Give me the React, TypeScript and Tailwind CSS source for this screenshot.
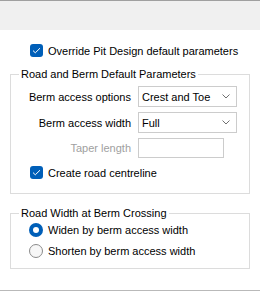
import React from 'react';

const Check: React.FC<{ label: string }> = ({ label }) => (
  <div className="flex items-center gap-[5px] h-[17px]">
    <span className="flex items-center justify-center w-[13px] h-[13px] rounded-[3px] bg-[#005fb8]">
      <svg width="9" height="7" viewBox="0 0 9 7">
        <polyline points="1,3.6 3.3,5.8 8,1.2" fill="none" stroke="#fff" strokeWidth="1" />
      </svg>
    </span>
    <span>{label}</span>
  </div>
);

const Radio: React.FC<{ label: string; checked?: boolean }> = ({ label, checked }) => (
  <div className="flex items-center gap-[5px] h-[17px]">
    {checked ? (
      <span className="flex items-center justify-center w-[14px] h-[14px] rounded-full bg-[#005fb8]">
        <span className="w-[6px] h-[6px] rounded-full bg-white" />
      </span>
    ) : (
      <span className="w-[14px] h-[14px] rounded-full border border-[#8b8b8b] bg-[#f7f7f7]" />
    )}
    <span>{label}</span>
  </div>
);

const Select: React.FC<{ value: string }> = ({ value }) => (
  <div className="flex items-center justify-between w-[99px] h-[21px] border border-[#cccccc] bg-white pl-[3px] pr-[6px]">
    <span>{value}</span>
    <svg width="8" height="5" viewBox="0 0 8 5">
      <polyline points="0.5,0.5 4,4 7.5,0.5" fill="none" stroke="#707070" strokeWidth="1" />
    </svg>
  </div>
);

const App: React.FC = () => {
  return (
    <div className="w-[260px] h-[291px] bg-white border-b border-[#b9b9b9] text-[11px] leading-[16px] text-black font-['Liberation_Sans',Arial,sans-serif] flex flex-col">
      <div className="h-[30px] bg-[#f0f0f0] border-t border-[#a0a0a0]" />
      <div className="pl-[30px] pt-[12px]">
        <Check label="Override Pit Design default parameters" />
      </div>
      <fieldset className="ml-[10px] w-[240px] mt-[7px] border border-[#dcdcdc] pb-[12px]">
        <legend className="ml-[8px] px-[2px]">Road and Berm Default Parameters</legend>
        <div className="grid grid-cols-[120px_1fr] gap-x-[7px] gap-y-[5px] items-center mt-[4px]">
          <span className="text-right">Berm access options</span>
          <Select value="Crest and Toe" />
          <span className="text-right">Berm access width</span>
          <Select value="Full" />
          <span className="text-right text-[#a0a0a0]">Taper length</span>
          <div className="w-[86px] h-[20px] border border-[#cccccc] bg-white" />
        </div>
        <div className="pl-[19px] mt-[6px]">
          <Check label="Create road centreline" />
        </div>
      </fieldset>
      <fieldset className="ml-[10px] w-[240px] mt-[11px] border border-[#dcdcdc] pb-[9px]">
        <legend className="ml-[8px] px-[2px]">Road Width at Berm Crossing</legend>
        <div className="pl-[18px] flex flex-col gap-[4px]">
          <Radio label="Widen by berm access width" checked />
          <Radio label="Shorten by berm access width" />
        </div>
      </fieldset>
    </div>
  );
};

export default App;
